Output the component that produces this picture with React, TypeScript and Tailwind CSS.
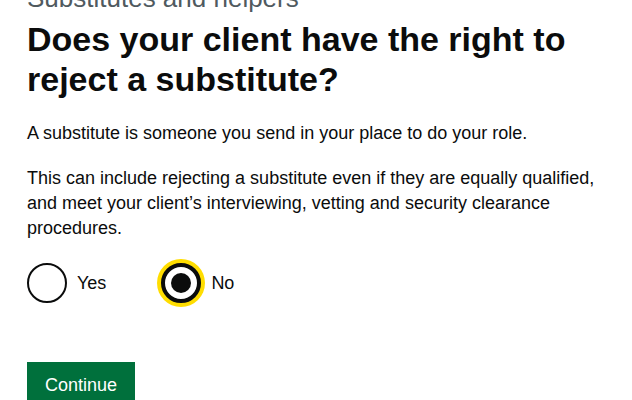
const App = () => {
  return (
    <div className="min-h-screen bg-white overflow-hidden font-['Liberation_Sans',Arial,sans-serif] text-[#0b0c0c]">
      <main className="px-[27px]">
        {/* Caption + heading */}
        <span className="block -mt-[14px] text-[26px] leading-[25px] text-[#505a5f]">Substitutes and helpers</span>
        <h1 className="mt-[8px] text-[34px] leading-[40px] font-bold">
          Does your client have the right to reject a substitute?
        </h1>

        {/* Hint */}
        <p className="mt-[22px] text-[18px] leading-[25px]">
          A substitute is someone you send in your place to do your role.
        </p>
        <p className="mt-[20px] text-[18px] leading-[25px] max-w-[590px]">
          This can include rejecting a substitute even if they are equally qualified, and meet your client’s interviewing, vetting and security clearance procedures.
        </p>

        {/* Radios */}
        <div className="mt-[22px] flex items-center gap-[10px]">
          <label className="flex items-center gap-[10px] cursor-pointer">
            <span className="w-[40px] h-[40px] rounded-full border-2 border-[#0b0c0c] bg-white" />
            <span className="text-[18px] leading-[25px]">Yes</span>
          </label>
          <label className="ml-[45px] flex items-center gap-[10px] cursor-pointer">
            <span className="w-[40px] h-[40px] rounded-full border-[4px] border-[#0b0c0c] bg-white flex items-center justify-center ring-4 ring-[#ffdd00]">
              <span className="w-[20px] h-[20px] rounded-full bg-[#0b0c0c]" />
            </span>
            <span className="text-[18px] leading-[25px]">No</span>
          </label>
        </div>

        {/* Button */}
        <button className="mt-[59px] bg-[#00703c] text-white text-[18px] leading-[19px] px-[18px] pt-[14px] pb-[10px] shadow-[0_2px_0_#002d18]">
          Continue
        </button>
      </main>
    </div>
  );
};

export default App;
